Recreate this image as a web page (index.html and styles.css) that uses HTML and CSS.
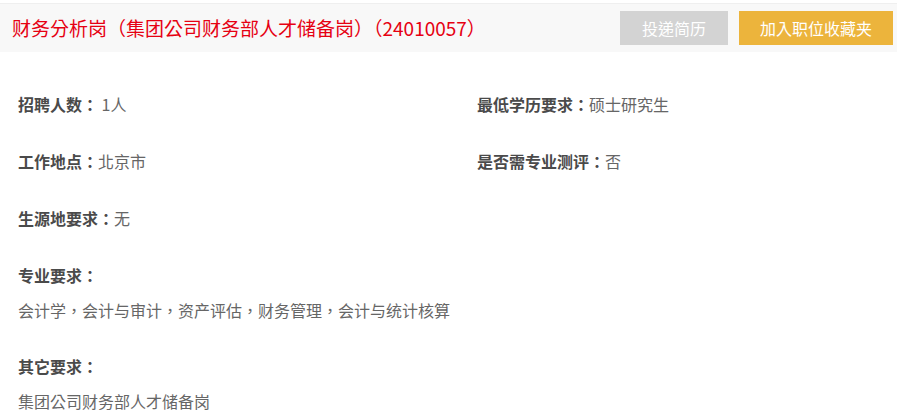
FILE: index.html
```html
<!DOCTYPE html>
<html lang="zh-CN">
<head>
    <meta charset="UTF-8">
    <meta name="viewport" content="width=device-width, initial-scale=1.0">
    <title>职位详情</title>
    <link rel="stylesheet" href="styles.css">
</head>
<body>
    <div class="job-header">
        <h1 class="job-title">财务分析岗（集团公司财务部人才储备岗）（24010057）</h1>
        <div class="job-actions">
            <button class="btn btn-disabled" type="button">投递简历</button>
            <button class="btn btn-fav" type="button">加入职位收藏夹</button>
        </div>
    </div>

    <div class="job-info">
        <div class="info-grid">
            <p class="info-row"><strong>招聘人数：</strong> 1人</p>
            <p class="info-row"><strong>最低学历要求：</strong>硕士研究生</p>
            <p class="info-row"><strong>工作地点：</strong>北京市</p>
            <p class="info-row"><strong>是否需专业测评：</strong>否</p>
            <p class="info-row"><strong>生源地要求：</strong>无</p>
        </div>

        <h3 class="section-title">专业要求：</h3>
        <p class="section-text">会计学，会计与审计，资产评估，财务管理，会计与统计核算</p>

        <h3 class="section-title">其它要求：</h3>
        <p class="section-text last">集团公司财务部人才储备岗</p>
    </div>
</body>
</html>
```

FILE: styles.css
```css
body {
    margin: 0;
    padding: 0;
    font-family: "Noto Sans CJK TC", "Noto Sans CJK SC", "Noto Sans", sans-serif;
    font-feature-settings: "locl" 0;
    background: #fff;
    color: #666;
}

.job-header {
    margin: 3px 3px 0 0;
    height: 49px;
    background: #f8f8f8;
    border-top: 1px solid #efefef;
    box-sizing: border-box;
    display: flex;
    align-items: center;
    justify-content: space-between;
    padding: 0 4px 0 12px;
}

.job-title {
    margin: 0;
    font-size: 19px;
    font-weight: normal;
    color: #e60012;
    line-height: 24px;
}

.job-actions {
    display: flex;
    gap: 11px;
}

.btn {
    height: 34px;
    border: none;
    color: #fff;
    font-family: inherit;
    font-feature-settings: inherit;
    font-size: 16px;
    cursor: pointer;
}

.btn-disabled {
    width: 108px;
    background: #d3d3d3;
}

.btn-fav {
    width: 154px;
    background: #ecb43c;
}

.job-info {
    padding: 40px 18px 0 18px;
    font-size: 16px;
}

.info-grid {
    display: grid;
    grid-template-columns: 459px 1fr;
}

.info-row {
    margin: 0 0 33px 0;
    line-height: 24px;
}

.info-row strong,
.section-title {
    color: #4a4a4a;
    font-weight: bold;
}

.section-title {
    margin: 0 0 11px 0;
    font-size: 16px;
    line-height: 24px;
}

.section-text {
    margin: 0 0 32px 0;
    line-height: 24px;
}

.section-text.last {
    margin-bottom: 0;
}
```
